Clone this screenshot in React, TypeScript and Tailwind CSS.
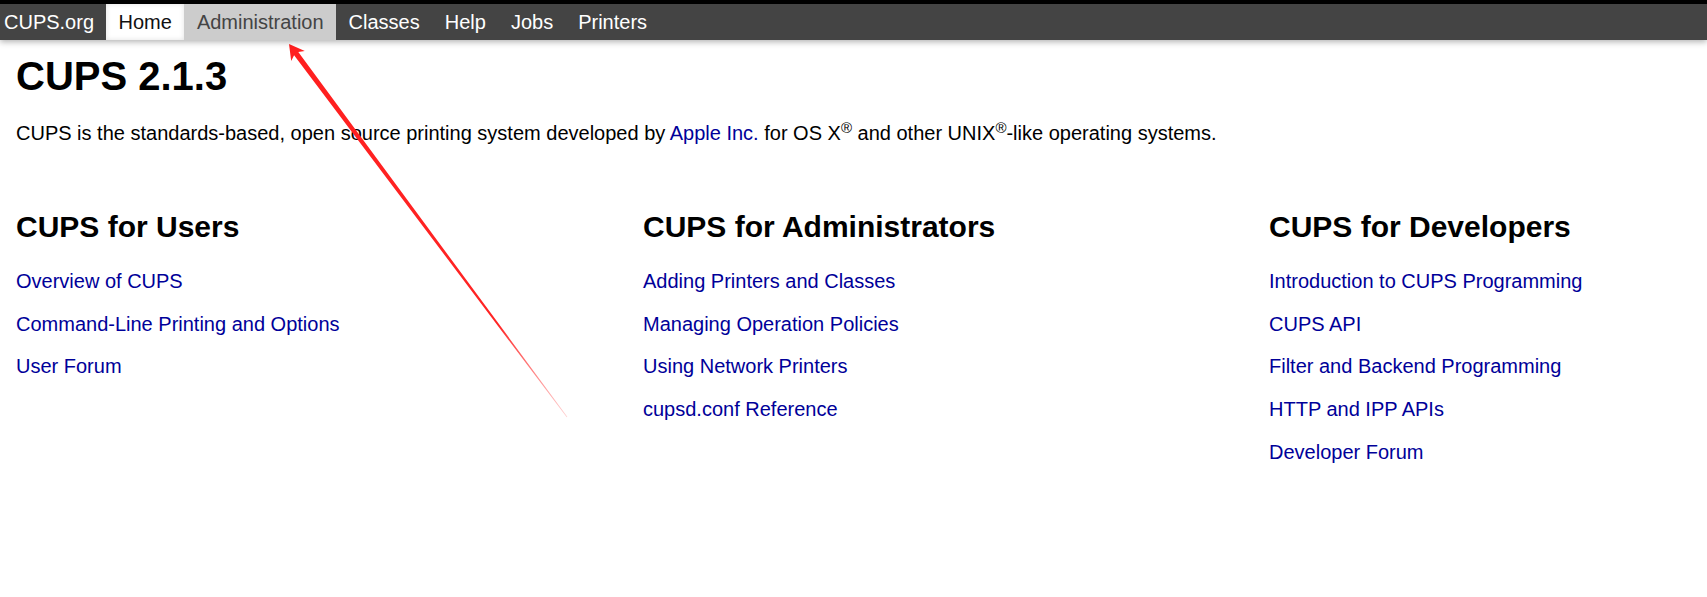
import React from "react";

const columns = [
  {
    title: "CUPS for Users",
    links: ["Overview of CUPS", "Command-Line Printing and Options", "User Forum"],
  },
  {
    title: "CUPS for Administrators",
    links: [
      "Adding Printers and Classes",
      "Managing Operation Policies",
      "Using Network Printers",
      "cupsd.conf Reference",
    ],
  },
  {
    title: "CUPS for Developers",
    links: [
      "Introduction to CUPS Programming",
      "CUPS API",
      "Filter and Backend Programming",
      "HTTP and IPP APIs",
      "Developer Forum",
    ],
  },
];

function Arrow() {
  // red annotation arrow drawn over the page
  return (
    <svg
      className="absolute left-0 top-0 pointer-events-none"
      width={1707}
      height={597}
      viewBox="0 0 1707 597"
    >
      <defs>
        <linearGradient id="fade" x1="289" y1="44" x2="567" y2="417" gradientUnits="userSpaceOnUse">
          <stop offset="0" stopColor="#ff1f1f" />
          <stop offset="0.75" stopColor="#ff2424" />
          <stop offset="1" stopColor="#ff4a4a" stopOpacity="0.25" />
        </linearGradient>
      </defs>
      <polygon
        points="289,44 304.8,50.9 298.3,52 567.3,416.8 566.7,417.2 294.1,55.2 291.2,61.1"
        fill="url(#fade)"
      />
    </svg>
  );
}

export default function App() {
  return (
    <div className="relative min-h-screen w-full overflow-hidden bg-white text-black font-['Liberation_Sans',Arial,sans-serif]">
      {/* Top nav */}
      <div className="h-[4px] bg-black" />
      <nav className="relative z-10 flex h-[36px] bg-[#444444] text-[20px] leading-[36px] shadow-[0_2px_6px_rgba(0,0,0,0.3)]">
        <a className="pl-[4px] pr-[12px] text-white">CUPS.org</a>
        <a className="px-[12.5px] bg-white text-[#111] shadow-[inset_0_0_5px_rgba(0,0,0,0.12)]">Home</a>
        <a className="px-[12.5px] bg-[#cccccc] text-[#444444]">Administration</a>
        <a className="px-[12.5px] text-white">Classes</a>
        <a className="px-[12.5px] text-white">Help</a>
        <a className="px-[12.5px] text-white">Jobs</a>
        <a className="px-[12.5px] text-white">Printers</a>
      </nav>

      <main className="pl-[16px]">
        <h1 className="mt-[13px] text-[40px] leading-[46px] font-bold">CUPS 2.1.3</h1>
        <p className="mt-[23px] text-[20px] leading-[23px]">
          CUPS is the standards-based, open source printing system developed by{" "}
          <a className="text-[#000099]">Apple Inc.</a> for OS X<sup>®</sup> and other UNIX
          <sup>®</sup>-like operating systems.
        </p>

        <div className="mt-[64px] grid grid-cols-[627px_626px_1fr]">
          {columns.map((col) => (
            <div key={col.title}>
              <h2 className="text-[30px] leading-[35px] font-bold">{col.title}</h2>
              <div className="mt-[26px] flex flex-col gap-[19.67px] text-[20px] leading-[23px]">
                {col.links.map((l) => (
                  <a key={l} className="text-[#000099]">
                    {l}
                  </a>
                ))}
              </div>
            </div>
          ))}
        </div>
      </main>

      <Arrow />
    </div>
  );
}
